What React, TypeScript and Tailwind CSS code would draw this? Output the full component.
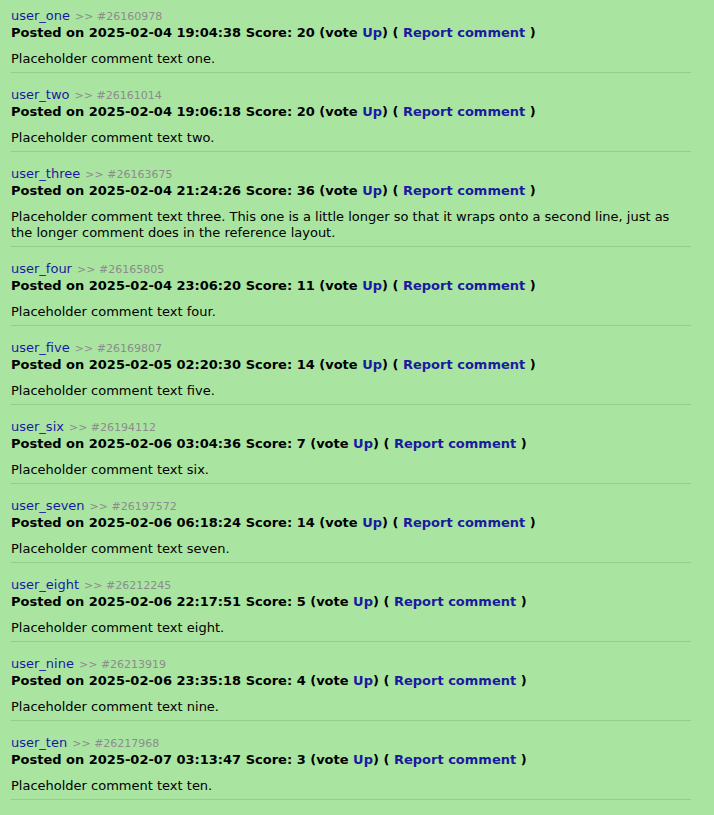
const comments = [
  { user: "user_one", id: "26160978", date: "2025-02-04 19:04:38", score: 20, text: "Placeholder comment text one." },
  { user: "user_two", id: "26161014", date: "2025-02-04 19:06:18", score: 20, text: "Placeholder comment text two." },
  { user: "user_three", id: "26163675", date: "2025-02-04 21:24:26", score: 36, text: "Placeholder comment text three. This one is a little longer so that it wraps onto a second line, just as the longer comment does in the reference layout." },
  { user: "user_four", id: "26165805", date: "2025-02-04 23:06:20", score: 11, text: "Placeholder comment text four." },
  { user: "user_five", id: "26169807", date: "2025-02-05 02:20:30", score: 14, text: "Placeholder comment text five." },
  { user: "user_six", id: "26194112", date: "2025-02-06 03:04:36", score: 7, text: "Placeholder comment text six." },
  { user: "user_seven", id: "26197572", date: "2025-02-06 06:18:24", score: 14, text: "Placeholder comment text seven." },
  { user: "user_eight", id: "26212245", date: "2025-02-06 22:17:51", score: 5, text: "Placeholder comment text eight." },
  { user: "user_nine", id: "26213919", date: "2025-02-06 23:35:18", score: 4, text: "Placeholder comment text nine." },
  { user: "user_ten", id: "26217968", date: "2025-02-07 03:13:47", score: 3, text: "Placeholder comment text ten." },
];

function Comment({ c }: { c: (typeof comments)[number] }) {
  return (
    <div className="border-b border-[#8fd08a] pt-[14px] first:pt-[8px] pb-[5px]">
      <div className="text-[13px] leading-[16px]">
        <a className="text-[#1a1aa0]">{c.user}</a>
        <span className="text-[#8c8c8c] text-[11px] ml-[5px]">&gt;&gt; #{c.id}</span>
      </div>
      <div className="font-bold text-[13px] leading-[16px] text-black">
        Posted on {c.date} Score: {c.score} (vote <a className="text-[#1a1aa0]">Up</a>) ({" "}
        <a className="text-[#1a1aa0]">Report comment</a> )
      </div>
      <div className="text-[13px] leading-[16px] mt-[10px] text-black">{c.text}</div>
    </div>
  );
}

export default function App() {
  return (
    <main className="min-h-[815px] w-[714px] bg-[#a9e5a1] font-['DejaVu_Sans',Verdana,sans-serif]">
      <div className="pl-[11px] w-[691px]">
        {comments.map((c) => (
          <Comment key={c.id} c={c} />
        ))}
      </div>
    </main>
  );
}
